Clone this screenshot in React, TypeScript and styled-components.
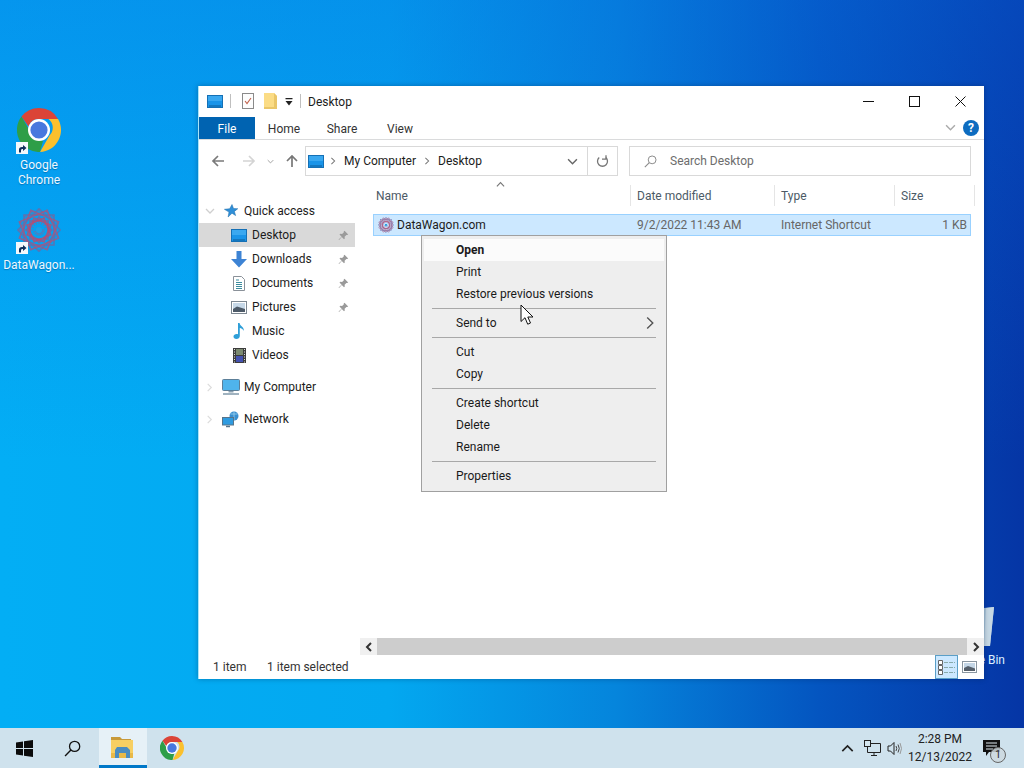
import React from "react";
import styled, { createGlobalStyle } from "styled-components";

const GlobalStyle = createGlobalStyle`
  html, body { margin: 0; padding: 0; height: 768px; overflow: hidden; }
  body { font-family: Roboto, "Open Sans", sans-serif; font-size: 12px; color: #1c1c1c; }
  * { box-sizing: border-box; }
  svg { display: block; flex-shrink: 0; }
`;

const FONT_SIZE = "12px";

// ---------- icons ----------
const PcIcon = ({ w = 16, h = 13 }: { w?: number; h?: number }) => (
  <svg width={w} height={h} viewBox="0 0 16 13">
    <rect x="0.5" y="0.5" width="15" height="12" fill="#1a94e8" stroke="#1570b5" />
    <rect x="1" y="1" width="14" height="5" fill="#3aa8f0" />
    <rect x="2" y="10.5" width="12" height="1" fill="#0c5a96" />
  </svg>
);

const ChromeIcon = ({ size }: { size: number }) => (
  <svg width={size} height={size} viewBox="2 2 44 44">
    <path d="M24 2a22 22 0 0 1 19.05 11L24 13a11 11 0 0 0-10.4 7.4L6.5 10.6A22 22 0 0 1 24 2z" fill="#db4437" />
    <path d="M43.05 13A22 22 0 0 1 25 46l9.5-16.500A11 11 0 0 0 33.500 13z" fill="#fbc02d" />
    <path d="M25 46A22 22 0 0 1 6.500 10.600l9.600 16.600a11 11 0 0 0 12 7.400L25 46z" fill="#2e9e48" />
    <circle cx="24" cy="24" r="11" fill="#fff" />
    <circle cx="24" cy="24" r="8.600" fill="#4878de" />
  </svg>
);

const ShortcutBadge = styled.span`
  position: absolute;
  left: -1px;
  bottom: -2px;
  width: 12px;
  height: 12px;
  background: #f4f8fb;
  display: flex;
  align-items: center;
  justify-content: center;
`;

const ShortcutArrow = () => (
  <svg width="9" height="9" viewBox="0 0 9 9">
    <path d="M1 8.500V5.500Q1 3 4 3H5V1L8.500 4 5 7V5H4Q3 5 3 6.500V8.500z" fill="#10305c" />
  </svg>
);

const WagonIcon = ({ size }: { size: number }) => (
  <svg width={size} height={size} viewBox="0 0 44 44">
    {Array.from({ length: 4 }).map((_, i) => (
      <g key={i} transform={`rotate(${i * 22.5} 22 22)`} fill="none" strokeWidth="1.600" opacity="0.8">
        <rect x="7" y="7" width="30" height="30" stroke={i % 2 ? "#a9567f" : "#6a6ca8"} />
        <rect x="13" y="13" width="18" height="18" stroke={i % 2 ? "#c04a6c" : "#8a5f92"} />
        <path d="M22 1v42M1 22h42" stroke="#7a6ca0" strokeWidth="1" strokeDasharray="3 3" />
      </g>
    ))}
    <circle cx="22" cy="22" r="3" fill="#1aa0e8" />
  </svg>
);

const Chevron = ({ dir = "down", size = 9, color = "#555", weight = 1.3 }: { dir?: string; size?: number; color?: string; weight?: number }) => {
  const rot = { down: 0, up: 180, right: -90, left: 90 }[dir] ?? 0;
  return (
    <svg width={size} height={size} viewBox="0 0 10 10" style={{ transform: `rotate(${rot}deg)` }}>
      <path d="M1 3l4 4 4-4" fill="none" stroke={color} strokeWidth={weight} />
    </svg>
  );
};

const PinIcon = () => (
  <svg width="11" height="11" viewBox="0 0 11 11">
    <path d="M6.500 0.800l3.700 3.700-1 .6-.8-.2-1.800 1.800.2 1.800-.8.8-2.200-2.200L1 10 .6 9.600l3-2.800L1.500 4.600l.8-.8 1.800.2L5.900 2.200l-.2-.8z" fill="#9a9a9a" />
  </svg>
);

const ArrowIcon = ({ dir, color }: { dir: "left" | "right" | "up"; color: string }) => {
  const rot = { left: 0, right: 180, up: 90 }[dir];
  return (
    <svg width="14" height="14" viewBox="0 0 14 14" style={{ transform: `rotate(${rot}deg)` }}>
      <path d="M13 7H2M7 2L2 7l5 5" fill="none" stroke={color} strokeWidth="1.700" />
    </svg>
  );
};

const DownloadIcon = () => (
  <svg width="16" height="17" viewBox="0 0 16 17">
    <path d="M5.500 0h5v8H16l-8 8.500L0 8h5.500z" fill="#3d83d4" />
  </svg>
);

const DocIcon = () => (
  <svg width="12" height="15" viewBox="0 0 12 15">
    <path d="M.5.500h8l3 3v11H.5z" fill="#fff" stroke="#8a9199" />
    <path d="M3 4h3M3 6.500h6M3 8.500h6M3 10.500h6M3 12.500h6" stroke="#3c8c9e" strokeWidth="1" />
  </svg>
);

const PictureIcon = () => (
  <svg width="16" height="13" viewBox="0 0 16 13">
    <rect x=".5" y=".5" width="15" height="12" fill="#fff" stroke="#7d8892" />
    <rect x="2" y="2" width="12" height="9" fill="#c6d8e8" />
    <path d="M2 8l4-2.500 8 2.500v3H2z" fill="#4d5a68" />
  </svg>
);

const MusicIcon = () => (
  <svg width="12" height="16" viewBox="0 0 12 16">
    <path d="M5 0h1.600c.3 3 4.400 3.600 4.400 8-1-1.800-2.600-2.700-4.200-3v8c0 1.800-1.600 3-3.400 3C1.600 16 .5 15 .5 13.600s1.500-2.600 3.100-2.600c.5 0 1 .1 1.400.3z" fill="#2f9fd8" />
  </svg>
);

const VideoIcon = () => (
  <svg width="13" height="15" viewBox="0 0 13 15">
    <rect width="13" height="15" fill="#3c3c3c" />
    <rect x="3" y="1" width="7" height="6" fill="#7b8a70" />
    <rect x="3" y="8" width="7" height="6" fill="#4452b0" />
    <path d="M1 1.500h1M1 4h1M1 6.500h1M1 9h1M1 11.500h1M1 14h1M11 1.500h1M11 4h1M11 6.500h1M11 9h1M11 11.500h1M11 14h1" stroke="#ddd" />
  </svg>
);

const MonitorIcon = () => (
  <svg width="18" height="16" viewBox="0 0 18 16">
    <rect x=".5" y=".5" width="17" height="11" rx="1" fill="#4fb4ec" stroke="#5c7f98" />
    <path d="M6.500 12h5v1.500h-5z" fill="#8aa0b0" />
    <path d="M1 15h16" stroke="#7f98aa" strokeWidth="1.500" />
  </svg>
);

const NetworkIcon = () => (
  <svg width="18" height="17" viewBox="0 0 18 17">
    <circle cx="12" cy="5" r="4.500" fill="#3a8fd0" />
    <path d="M8.500 3h7M12 .5v9" stroke="#9bd0ef" strokeWidth=".8" />
    <rect x=".5" y="6.500" width="11" height="7.500" fill="#2f9be0" stroke="#58748a" />
    <path d="M4 15.500h4" stroke="#58748a" strokeWidth="1.500" />
  </svg>
);

const QuickStar = () => (
  <svg width="14" height="14" viewBox="0 0 14 14">
    <path d="M8 .5l1.500 4 4.300.2-3.400 2.700 1.200 4.200L8 9.200 4.100 13l.9-4.900L.4 5.300l5.300-.6z" fill="#2f8fd8" stroke="#1a6aa8" strokeWidth=".5" />
  </svg>
);

const ClipboardIcon = () => (
  <svg width="12" height="16" viewBox="0 0 12 16">
    <rect x=".5" y=".5" width="11" height="15" fill="#fdfdfd" stroke="#8a8a8a" />
    <path d="M3 8l2 2.500L9 5" fill="none" stroke="#c0604a" strokeWidth="1.100" />
  </svg>
);

const FolderFlat = () => (
  <svg width="13" height="16" viewBox="0 0 13 16">
    <path d="M0 0h10l3 3v13H0z" fill="#fbdc85" />
    <path d="M10 0v14H0v2h13V3z" fill="#eac668" />
  </svg>
);

const Caret = () => (
  <svg width="8" height="9" viewBox="0 0 8 9">
    <path d="M.5 1h7v1.200h-7zM.5 4h7L4 8.500z" fill="#222" />
  </svg>
);

const SearchGlass = ({ size, color }: { size: number; color: string }) => (
  <svg width={size} height={size} viewBox="0 0 16 16">
    <circle cx="10" cy="6" r="4.800" fill="none" stroke={color} strokeWidth="1.200" />
    <path d="M6.500 9.500L1 15" stroke={color} strokeWidth="1.300" />
  </svg>
);

const RefreshIcon = () => (
  <svg width="13" height="13" viewBox="0 0 13 13">
    <path d="M9.800 2.500A5 5 0 1 1 3.200 2.500" fill="none" stroke="#777" strokeWidth="1.300" />
    <path d="M6 .2v4H2" fill="none" stroke="#777" strokeWidth="1.300" transform="translate(4 0)" />
  </svg>
);

const DetailsViewIcon = () => (
  <svg width="17" height="15" viewBox="0 0 17 15">
    <path d="M.5.500h4v4h-4zM.5 5.500h4v4h-4zM.5 10.500h4v4h-4z" fill="#fff" stroke="#666" />
    <path d="M6 2.500h11M6 7.500h11M6 12.500h11" stroke="#8aa" strokeDasharray="4 1" />
  </svg>
);

const ThumbViewIcon = () => (
  <svg width="15" height="12" viewBox="0 0 15 12">
    <rect x=".5" y=".5" width="14" height="11" fill="#fff" stroke="#8a96a0" />
    <rect x="2" y="2" width="11" height="8" fill="#c4d6e6" />
    <path d="M2 7l4-2 7 2.500V10H2z" fill="#555f6a" />
  </svg>
);

const WindowsLogo = () => (
  <svg width="17" height="17" viewBox="0 0 17 17">
    <path d="M0 2.400L7 1.400V8H0zM8 1.300L17 0V8H8zM0 9H7V15.600L0 14.600zM8 9H17V17L8 15.700z" fill="#0b0b0b" />
  </svg>
);

const ExplorerIcon = () => (
  <svg width="24" height="22" viewBox="0 0 24 22">
    <path d="M0 1h9l2 2h9v3H0z" fill="#c89a3a" />
    <rect y="4" width="22" height="18" fill="#f7cf62" />
    <rect y="17" width="22" height="5" fill="#e8b948" />
    <path d="M6 11h10l3 3v8h-4v-5H8v5H4v-8z" fill="#4a8cc0" />
  </svg>
);

const TrayNetwork = () => (
  <svg width="17" height="17" viewBox="0 0 17 17">
    <path d="M3.500 3.500h13v9h-13zM7 15.500h6M10 12.500v3" fill="none" stroke="#222" />
    <rect x=".5" y=".5" width="6" height="6" fill="#d5e6ef" stroke="#222" />
  </svg>
);

const TrayVolume = () => (
  <svg width="16" height="15" viewBox="0 0 16 15">
    <path d="M1 5h2.500L7 1.500v12L3.500 10H1z" fill="none" stroke="#222" />
    <path d="M9 5q1.500 2.500 0 5M11 3.500q2.500 4 0 8" fill="none" stroke="#444" />
    <path d="M13 2q3 5.500 0 11" fill="none" stroke="#999" />
  </svg>
);

const NotifyIcon = () => (
  <svg width="17" height="16" viewBox="0 0 17 16">
    <path d="M0 0h17v12H6l-3 4v-4H0z" fill="#111" />
    <path d="M3 3h11M3 6h11M3 9h7" stroke="#dfe9ef" />
  </svg>
);

const CursorIcon = () => (
  <svg width="14" height="22" viewBox="0 0 14 22">
    <path d="M1 1v16.500l4-3.800 2.700 6.500 2.800-1.200L7.800 13H13z" fill="#fff" stroke="#111" />
  </svg>
);

// ---------- desktop ----------
const Desktop = styled.div`
  position: relative;
  width: 1024px;
  height: 768px;
  overflow: hidden;
  background:
    linear-gradient(to bottom, rgba(8, 105, 225, 0.35) 0%, rgba(8, 105, 225, 0) 60%),
    linear-gradient(90deg, #03aef5 0%, #03a8f0 38%, #0585dc 60%, #0455c0 80%, #0535a5 100%);
`;

const DesktopIcon = styled.div<{ $left: number; $top: number }>`
  position: absolute;
  left: ${(p) => p.$left}px;
  top: ${(p) => p.$top}px;
  width: 76px;
  display: flex;
  flex-direction: column;
  align-items: center;
  color: #eef8ff;
  font-size: ${FONT_SIZE};
  line-height: 15px;
  text-align: center;
  text-shadow: 0 1px 1px rgba(0, 40, 90, 0.35);
`;

const IconBox = styled.div`
  position: relative;
  width: 44px;
  height: 44px;
  margin-bottom: 6px;
`;

const RecycleBin = styled.div`
  position: absolute;
  left: 925px;
  top: 607px;
  width: 80px;
  text-align: right;
  color: #dff1ff;
  font-size: ${FONT_SIZE};
  line-height: 15px;
`;

const BinShape = styled.div`
  margin: 0 0 7px auto;
  width: 80px;
  display: flex;
  justify-content: flex-end;
  padding-right: 9px;
`;

// ---------- window ----------
const Window = styled.div`
  position: absolute;
  left: 198px;
  top: 86px;
  width: 786px;
  height: 593px;
  background: #fff;
  display: flex;
  flex-direction: column;
  border-left: 1px solid #a8e4f8;
  box-shadow: 0 0 5px rgba(0, 30, 60, 0.35);
`;

const TitleBar = styled.div`
  height: 30px;
  display: flex;
  align-items: center;
  padding: 0 1px 0 8px;
`;

const TitleSep = styled.span<{ $gap: number }>`
  width: 1px;
  height: 14px;
  background: #bfbfbf;
  margin: 0 ${(p) => p.$gap}px;
`;

const TitleGap = styled.span<{ $w: number }>`
  width: ${(p) => p.$w}px;
`;

const TitleText = styled.span`
  font-size: ${FONT_SIZE};
  margin: 2px auto 0 0;
`;

const WinControl = styled.div`
  width: 46px;
  height: 30px;
  display: flex;
  align-items: center;
  justify-content: center;
`;

const RibbonTabs = styled.div`
  height: 24px;
  display: flex;
  align-items: stretch;
  border-bottom: 1px solid #dadbdc;
  padding-right: 5px;
`;

const FileTab = styled.div`
  width: 56px;
  background: #0063b1;
  color: #fff;
  font-size: ${FONT_SIZE};
  display: flex;
  align-items: center;
  justify-content: center;
  margin-top: 1px;
  padding-top: 1px;
`;

const RibbonTab = styled.div`
  width: 58px;
  display: flex;
  align-items: center;
  justify-content: center;
  color: #333;
  font-size: ${FONT_SIZE};
  padding-top: 2px;
`;

const RibbonRight = styled.div`
  margin-left: auto;
  display: flex;
  align-items: center;
  gap: 7px;
`;

const HelpDot = styled.div`
  width: 16px;
  height: 16px;
  border-radius: 50%;
  background: #0d6cc0;
  color: #fff;
  font-weight: 700;
  font-size: 12px;
  line-height: 16px;
  text-align: center;
`;

const NavBar = styled.div`
  height: 40px;
  display: flex;
  align-items: center;
  padding: 2px 0 0 12px;
`;

const NavButton = styled.div<{ $w: number }>`
  width: ${(p) => p.$w}px;
  display: flex;
  justify-content: center;
`;

const AddressBox = styled.div`
  margin-left: 6px;
  width: 313px;
  height: 30px;
  border: 1px solid #d9d9d9;
  display: flex;
  align-items: center;
  padding-left: 2px;
  font-size: ${FONT_SIZE};
`;

const Crumb = styled.span`
  margin: 0 7px;
`;

const CrumbLead = styled.span`
  width: 5px;
`;

const AddressEnd = styled.div`
  margin-left: auto;
  display: flex;
  align-items: center;
  height: 100%;
`;

const RefreshCell = styled.div`
  width: 30px;
  height: 100%;
  border-left: 1px solid #d9d9d9;
  margin-left: 9px;
  display: flex;
  align-items: center;
  justify-content: center;
`;

const SearchBox = styled.div`
  margin-left: 11px;
  width: 342px;
  height: 30px;
  border: 1px solid #d9d9d9;
  display: flex;
  align-items: center;
  gap: 13px;
  padding-left: 14px;
  color: #6d6d6d;
  font-size: ${FONT_SIZE};
`;

const Body = styled.div`
  flex: 1;
  display: flex;
  min-height: 0;
`;

const Sidebar = styled.div`
  width: 159px;
  padding-top: 19px;
  flex-shrink: 0;
`;

const TreeRow = styled.div<{ $indent: number; $active?: boolean; $gap?: boolean }>`
  height: 24px;
  display: flex;
  align-items: center;
  margin-top: ${(p) => (p.$gap ? 8 : 0)}px;
  width: 156px;
  padding-left: ${(p) => p.$indent}px;
  background: ${(p) => (p.$active ? "#d9d9d9" : "transparent")};
  font-size: ${FONT_SIZE};
`;

const TreeIcon = styled.span`
  width: 20px;
  margin-right: 3px;
  display: flex;
  justify-content: center;
`;

const TreeLabel = styled.span`
  flex: 1;
`;

const PinCell = styled.span`
  width: 16px;
  margin-right: 1px;
`;

const ExpandCell = styled.span`
  width: 12px;
  margin-right: 4px;
`;

const Main = styled.div`
  flex: 1;
  display: flex;
  flex-direction: column;
  min-width: 0;
`;

const List = styled.div`
  position: relative;
  flex: 1;
  padding: 5px 0 0 15px;
`;

const SortCaret = styled.div`
  position: absolute;
  left: 138px;
  top: 0;
`;

const HeaderRow = styled.div`
  display: grid;
  grid-template-columns: 258px 144px 120px 80px;
  height: 21px;
  margin-bottom: 8px;
`;

const HeaderCell = styled.div`
  display: flex;
  align-items: center;
  padding-left: 6px;
  color: #4c5a66;
  font-size: ${FONT_SIZE};
  border-right: 1px solid #e5e5e5;

  &:first-child {
    padding-left: 3px;
  }
`;

const FileRow = styled.div`
  width: 598px;
  height: 22px;
  display: grid;
  grid-template-columns: 258px 144px 120px 1fr;
  align-items: center;
  background: #cce8ff;
  border: 1px solid #99d1ff;
  color: #666;
  font-size: ${FONT_SIZE};
`;

const NameCell = styled.div`
  display: flex;
  align-items: center;
  gap: 3px;
  padding-left: 4px;
  color: #1c1c1c;
`;

const SmallIcon = styled.div`
  position: relative;
  width: 16px;
  height: 16px;
  display: flex;
`;

const DataCell = styled.div<{ $right?: boolean }>`
  padding-left: 5px;
  padding-right: 3px;
  text-align: ${(p) => (p.$right ? "right" : "left")};
`;

const HScroll = styled.div`
  height: 17px;
  background: #f0f0f0;
  display: flex;
  align-items: center;
  margin-left: 2px;
`;

const ScrollArrow = styled.div`
  width: 17px;
  display: flex;
  justify-content: center;
`;

const ScrollThumb = styled.div`
  flex: 1;
  height: 100%;
  background: #cdcdcd;
`;

const StatusBar = styled.div`
  height: 24px;
  display: flex;
  align-items: center;
  padding-left: 14px;
  font-size: ${FONT_SIZE};
  color: #333;
`;

const StatusText = styled.span`
  width: 54px;
`;

const ViewToggles = styled.div`
  margin-left: auto;
  margin-right: 3px;
  display: flex;
  height: 24px;
`;

const ViewButton = styled.div<{ $on?: boolean }>`
  width: 23px;
  display: flex;
  align-items: center;
  justify-content: center;
  background: ${(p) => (p.$on ? "#cce8ff" : "transparent")};
  border: 1px solid ${(p) => (p.$on ? "#5b9fc7" : "transparent")};
`;

// ---------- context menu ----------
const Menu = styled.div`
  position: absolute;
  left: 421px;
  top: 235px;
  width: 246px;
  height: 257px;
  padding: 3px 2px;
  background: #eeeeee;
  border: 1px solid #a0a0a0;
  font-size: ${FONT_SIZE};
  color: #1a1a1a;
`;

const MenuItem = styled.div<{ $hot?: boolean; $bold?: boolean }>`
  height: 22px;
  display: flex;
  align-items: center;
  justify-content: space-between;
  padding: 0 7px 0 32px;
  background: ${(p) => (p.$hot ? "#fbfbfb" : "transparent")};
  font-weight: ${(p) => (p.$bold ? 700 : 400)};
`;

const MenuSep = styled.div`
  height: 1px;
  margin: 3px 8px;
  background: #a8a8a8;
`;

const Pointer = styled.div`
  position: absolute;
  left: 520px;
  top: 304px;
`;

// ---------- taskbar ----------
const Taskbar = styled.div`
  position: absolute;
  left: 0;
  right: 0;
  bottom: 0;
  height: 40px;
  background: #cfe2ed;
  display: flex;
  align-items: stretch;
`;

const TaskButton = styled.div<{ $active?: boolean }>`
  width: 48px;
  display: flex;
  align-items: center;
  justify-content: center;
  background: ${(p) => (p.$active ? "#e6f1f7" : "transparent")};
  border-bottom: ${(p) => (p.$active ? "3px solid #0078c8" : "none")};
  margin-left: ${(p) => (p.$active ? 3 : 0)}px;
  margin-right: ${(p) => (p.$active ? 1 : 0)}px;
`;

const Tray = styled.div`
  margin-left: auto;
  display: flex;
  align-items: center;
`;

const TrayItem = styled.div<{ $w: number }>`
  width: ${(p) => p.$w}px;
  display: flex;
  justify-content: center;
`;

const Clock = styled.div`
  width: 70px;
  text-align: center;
  font-size: ${FONT_SIZE};
  line-height: 18px;
  color: #222;
`;

const NotifyWrap = styled.div`
  position: relative;
  width: 49px;
  display: flex;
  justify-content: center;
  padding-right: 17px;
`;

const NotifyCount = styled.span`
  position: absolute;
  left: 15px;
  top: 7px;
  width: 16px;
  height: 16px;
  border-radius: 50%;
  border: 1px solid #666;
  background: rgba(205, 216, 222, 0.85);
  font-size: 10px;
  line-height: 14px;
  text-align: center;
  color: #222;
`;

const tree = [
  { label: "Desktop", icon: <PcIcon />, pin: true, active: true },
  { label: "Downloads", icon: <DownloadIcon />, pin: true },
  { label: "Documents", icon: <DocIcon />, pin: true },
  { label: "Pictures", icon: <PictureIcon />, pin: true },
  { label: "Music", icon: <MusicIcon /> },
  { label: "Videos", icon: <VideoIcon /> },
];

const columns = ["Name", "Date modified", "Type", "Size"];

export default function App() {
  return (
    <Desktop>
      <GlobalStyle />

      <DesktopIcon $left={1} $top={108}>
        <IconBox>
          <ChromeIcon size={44} />
          <ShortcutBadge><ShortcutArrow /></ShortcutBadge>
        </IconBox>
        <span>Google</span>
        <span>Chrome</span>
      </DesktopIcon>

      <DesktopIcon $left={1} $top={208}>
        <IconBox>
          <WagonIcon size={44} />
          <ShortcutBadge><ShortcutArrow /></ShortcutBadge>
        </IconBox>
        <span>DataWagon...</span>
      </DesktopIcon>

      <RecycleBin>
        <BinShape>
          <svg width="34" height="39" viewBox="0 0 34 39">
            <path d="M2 3l30-3-4 39H8z" fill="#a9c4d8" />
            <path d="M24 1l8-1-4 39h-6z" fill="#c6d8e4" />
          </svg>
        </BinShape>
        Recycle Bin
      </RecycleBin>

      <Window>
        <TitleBar>
          <PcIcon />
          <TitleSep $gap={7} />
          <TitleGap $w={4} />
          <ClipboardIcon />
          <TitleGap $w={10} />
          <FolderFlat />
          <TitleGap $w={8} />
          <Caret />
          <TitleSep $gap={7} />
          <TitleText>Desktop</TitleText>
          <WinControl>
            <svg width="11" height="11" viewBox="0 0 11 11"><path d="M0 5.500h11" stroke="#111" /></svg>
          </WinControl>
          <WinControl>
            <svg width="11" height="11" viewBox="0 0 11 11"><rect x=".5" y=".5" width="10" height="10" fill="none" stroke="#111" /></svg>
          </WinControl>
          <WinControl>
            <svg width="11" height="11" viewBox="0 0 11 11"><path d="M.5.500l10 10M10.500.500l-10 10" stroke="#111" /></svg>
          </WinControl>
        </TitleBar>

        <RibbonTabs>
          <FileTab>File</FileTab>
          <RibbonTab>Home</RibbonTab>
          <RibbonTab>Share</RibbonTab>
          <RibbonTab>View</RibbonTab>
          <RibbonRight>
            <Chevron color="#aaa" size={11} />
            <HelpDot>?</HelpDot>
          </RibbonRight>
        </RibbonTabs>

        <NavBar>
          <ArrowIcon dir="left" color="#7a7a7a" />
          <NavButton $w={17} />
          <ArrowIcon dir="right" color="#d4d4d4" />
          <NavButton $w={29}><Chevron size={7} color="#999" /></NavButton>
          <ArrowIcon dir="up" color="#777" />
          <AddressBox>
            <PcIcon />
            <CrumbLead />
            <Chevron dir="right" size={8} color="#777" />
            <Crumb>My Computer</Crumb>
            <Chevron dir="right" size={8} color="#777" />
            <Crumb>Desktop</Crumb>
            <AddressEnd>
              <Chevron size={11} color="#666" />
              <RefreshCell><RefreshIcon /></RefreshCell>
            </AddressEnd>
          </AddressBox>
          <SearchBox>
            <SearchGlass size={13} color="#8a8a8a" />
            Search Desktop
          </SearchBox>
        </NavBar>

        <Body>
          <Sidebar>
            <TreeRow $indent={6}>
              <ExpandCell><Chevron size={10} color="#cfcfcf" /></ExpandCell>
              <TreeIcon><QuickStar /></TreeIcon>
              <TreeLabel>Quick access</TreeLabel>
            </TreeRow>
            {tree.map((item) => (
              <TreeRow key={item.label} $indent={30} $active={item.active}>
                <TreeIcon>{item.icon}</TreeIcon>
                <TreeLabel>{item.label}</TreeLabel>
                <PinCell>{item.pin && <PinIcon />}</PinCell>
              </TreeRow>
            ))}
            <TreeRow $indent={6} $gap>
              <ExpandCell><Chevron dir="right" size={9} color="#dcdcdc" /></ExpandCell>
              <TreeIcon><MonitorIcon /></TreeIcon>
              <TreeLabel>My Computer</TreeLabel>
            </TreeRow>
            <TreeRow $indent={6} $gap>
              <ExpandCell><Chevron dir="right" size={9} color="#dcdcdc" /></ExpandCell>
              <TreeIcon><NetworkIcon /></TreeIcon>
              <TreeLabel>Network</TreeLabel>
            </TreeRow>
          </Sidebar>

          <Main>
            <List>
              <SortCaret><Chevron dir="up" size={9} color="#777" /></SortCaret>
              <HeaderRow>
                {columns.map((c) => (
                  <HeaderCell key={c}>{c}</HeaderCell>
                ))}
              </HeaderRow>
              <FileRow>
                <NameCell>
                  <SmallIcon>
                    <WagonIcon size={16} />
                  </SmallIcon>
                  DataWagon.com
                </NameCell>
                <DataCell>9/2/2022 11:43 AM</DataCell>
                <DataCell>Internet Shortcut</DataCell>
                <DataCell $right>1 KB</DataCell>
              </FileRow>
            </List>
            <HScroll>
              <ScrollArrow><Chevron dir="left" size={10} color="#333" weight={2} /></ScrollArrow>
              <ScrollThumb />
              <ScrollArrow><Chevron dir="right" size={10} color="#333" weight={2} /></ScrollArrow>
            </HScroll>
          </Main>
        </Body>

        <StatusBar>
          <StatusText>1 item</StatusText>
          <span>1 item selected</span>
          <ViewToggles>
            <ViewButton $on><DetailsViewIcon /></ViewButton>
            <ViewButton><ThumbViewIcon /></ViewButton>
          </ViewToggles>
        </StatusBar>
      </Window>

      <Menu>
        <MenuItem $hot $bold>Open</MenuItem>
        <MenuItem>Print</MenuItem>
        <MenuItem>Restore previous versions</MenuItem>
        <MenuSep />
        <MenuItem>
          Send to
          <Chevron dir="right" size={14} color="#555" weight={1} />
        </MenuItem>
        <MenuSep />
        <MenuItem>Cut</MenuItem>
        <MenuItem>Copy</MenuItem>
        <MenuSep />
        <MenuItem>Create shortcut</MenuItem>
        <MenuItem>Delete</MenuItem>
        <MenuItem>Rename</MenuItem>
        <MenuSep />
        <MenuItem>Properties</MenuItem>
      </Menu>

      <Pointer><CursorIcon /></Pointer>

      <Taskbar>
        <TaskButton><WindowsLogo /></TaskButton>
        <TaskButton><SearchGlass size={17} color="#111" /></TaskButton>
        <TaskButton $active><ExplorerIcon /></TaskButton>
        <TaskButton><ChromeIcon size={24} /></TaskButton>
        <Tray>
          <TrayItem $w={24}><Chevron dir="up" size={13} color="#222" /></TrayItem>
          <TrayItem $w={26}><TrayNetwork /></TrayItem>
          <TrayItem $w={20}><TrayVolume /></TrayItem>
          <Clock>
            <div>2:28 PM</div>
            <div>12/13/2022</div>
          </Clock>
          <NotifyWrap>
            <NotifyIcon />
            <NotifyCount>1</NotifyCount>
          </NotifyWrap>
        </Tray>
      </Taskbar>
    </Desktop>
  );
}
